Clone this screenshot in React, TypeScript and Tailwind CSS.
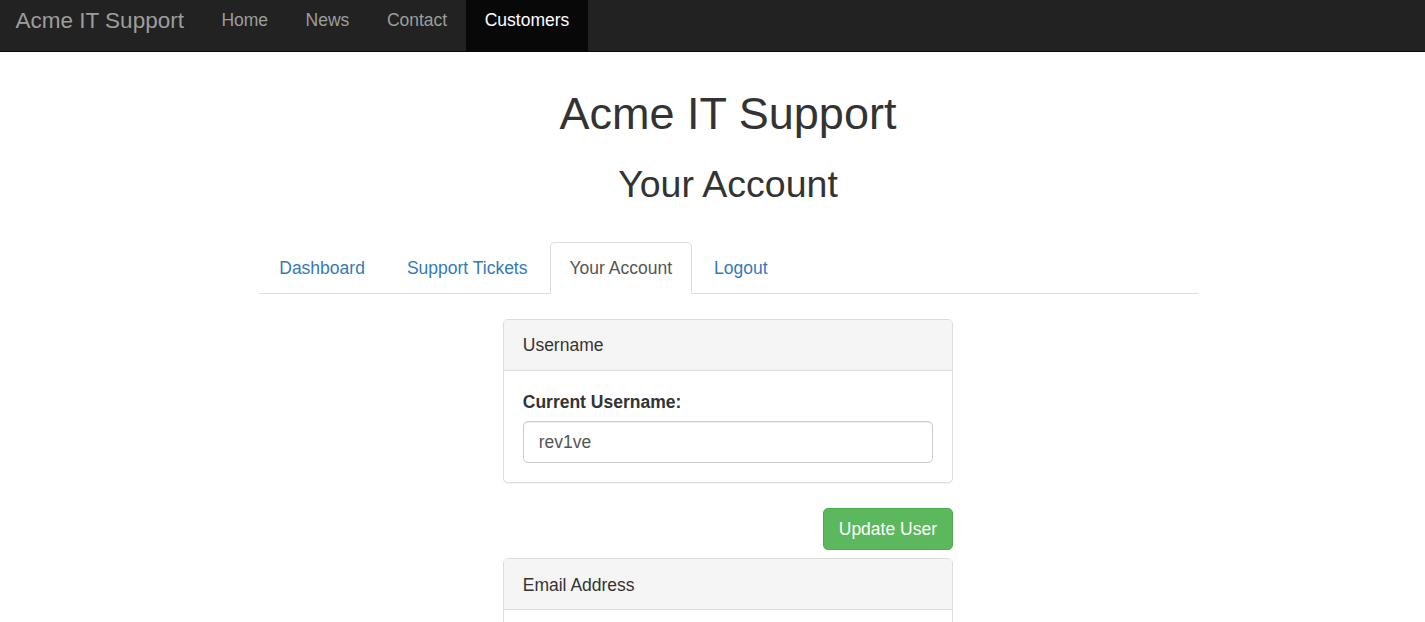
import React from "react";

const font = { fontFamily: '"Liberation Sans", Arial, Helvetica, sans-serif' };

function NavBar() {
  const links = ["Home", "News", "Contact"];
  return (
    <div className="flex h-[52px] border-b border-[#080808] bg-[#222222]">
      <div className="pl-[15.5px] pr-[18.75px] pt-[8px] text-[22.5px] leading-[25px] text-[#9d9d9d]">
        Acme IT Support
      </div>
      <ul className="flex">
        {links.map((l) => (
          <li key={l} className="px-[18.75px] pt-[8px] text-[17.5px] leading-[25px] text-[#9d9d9d]">
            {l}
          </li>
        ))}
        <li className="bg-[#080808] px-[18.75px] pt-[8px] text-[17.5px] leading-[25px] text-white">
          Customers
        </li>
      </ul>
    </div>
  );
}

function Tabs() {
  const tabs = ["Dashboard", "Support Tickets", "Your Account", "Logout"];
  return (
    <ul className="flex border-b border-[#dddddd] pl-[1px]">
      {tabs.map((t) => {
        const active = t === "Your Account";
        return (
          <li key={t} className="mr-[2.5px] -mb-px">
            <div
              className={
                active
                  ? "rounded-t-[5px] border border-[#dddddd] border-b-transparent bg-white px-[18.75px] pt-[13.5px] pb-[11.5px] text-[17.5px] leading-[25px] text-[#555555]"
                  : "rounded-t-[5px] border border-transparent px-[18.75px] pt-[13.5px] pb-[11.5px] text-[17.5px] leading-[25px] text-[#337ab7]"
              }
            >
              {t}
            </div>
          </li>
        );
      })}
    </ul>
  );
}

function PanelHeader({ title }: { title: string }) {
  return (
    <div className="rounded-t-[4px] border-b border-[#dddddd] bg-[#f5f5f5] px-[18.75px] pt-[13.5px] pb-[11.5px] text-[17.5px] leading-[25px] text-[#333333]">
      {title}
    </div>
  );
}

export default function App() {
  return (
    <div className="h-[622px] overflow-hidden bg-white" style={font}>
      <NavBar />
      <div className="pl-[31px]">
        <div className="mx-auto w-[939px]">
          <h1 className="mt-[37px] text-center text-[45px] font-normal leading-[49.5px] text-[#333333]">
            Acme IT Support
          </h1>
          <h2 className="mt-[25px] text-center text-[37.5px] font-normal leading-[41.25px] text-[#333333]">
            Your Account
          </h2>
          <div className="mt-[37px]">
            <Tabs />
          </div>
          <div className="mx-auto mt-[25px] w-[450px]">
            <div className="rounded-[5px] border border-[#dddddd] bg-white shadow-[0_1px_1px_rgba(0,0,0,0.05)]">
              <PanelHeader title="Username" />
              <div className="p-[18.75px]">
                <div className="mb-[6.25px] text-[17.5px] font-bold leading-[25px] text-[#333333]">
                  Current Username:
                </div>
                <div className="h-[42.5px] rounded-[5px] border border-[#cccccc] px-[15px] pt-[8.5px] pb-[6.5px] text-[17.5px] leading-[25px] text-[#555555] shadow-[inset_0_1px_1px_rgba(0,0,0,0.075)]">
                  rev1ve
                </div>
              </div>
            </div>
            <div className="mt-[25px] flex justify-end">
              <button className="rounded-[5px] border border-[#4cae4c] bg-[#5cb85c] px-[15px] py-[7.5px] text-[17.5px] leading-[25px] text-white">
                Update User
              </button>
            </div>
            <div className="mt-[8px] rounded-[5px] border border-[#dddddd] bg-white">
              <PanelHeader title="Email Address" />
              <div className="h-[120px]" />
            </div>
          </div>
        </div>
      </div>
    </div>
  );
}
